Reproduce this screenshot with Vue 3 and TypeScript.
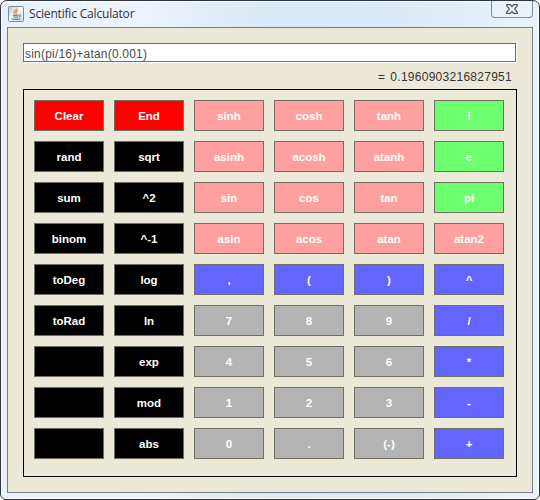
<script setup lang="ts">
import { ref } from 'vue'

type Tone = 'red' | 'black' | 'pink' | 'green' | 'blue' | 'gray'
interface Key { label: string; tone: Tone }

const expression = ref('sin(pi/16)+atan(0.001)')
const result = '0.1960903216827951'

const row = (labels: string[], tones: Tone[]): Key[] =>
  labels.map((label, i) => ({ label, tone: tones[i] }))

const keys: Key[] = [
  ...row(['Clear', 'End', 'sinh', 'cosh', 'tanh', 'i'], ['red', 'red', 'pink', 'pink', 'pink', 'green']),
  ...row(['rand', 'sqrt', 'asinh', 'acosh', 'atanh', 'e'], ['black', 'black', 'pink', 'pink', 'pink', 'green']),
  ...row(['sum', '^2', 'sin', 'cos', 'tan', 'pi'], ['black', 'black', 'pink', 'pink', 'pink', 'green']),
  ...row(['binom', '^-1', 'asin', 'acos', 'atan', 'atan2'], ['black', 'black', 'pink', 'pink', 'pink', 'pink']),
  ...row(['toDeg', 'log', ',', '(', ')', '^'], ['black', 'black', 'blue', 'blue', 'blue', 'blue']),
  ...row(['toRad', 'ln', '7', '8', '9', '/'], ['black', 'black', 'gray', 'gray', 'gray', 'blue']),
  ...row(['', 'exp', '4', '5', '6', '*'], ['black', 'black', 'gray', 'gray', 'gray', 'blue']),
  ...row(['', 'mod', '1', '2', '3', '-'], ['black', 'black', 'gray', 'gray', 'gray', 'blue']),
  ...row(['', 'abs', '0', '.', '(-)', '+'], ['black', 'black', 'gray', 'gray', 'gray', 'blue']),
]
</script>

<template>
  <div class="window">
    <header class="titlebar">
      <svg class="app-icon" width="16" height="16" viewBox="0 0 16 16">
        <defs>
          <linearGradient id="tile" x1="0" y1="0" x2="1" y2="1">
            <stop offset="0" stop-color="#b4c2d0" />
            <stop offset=".45" stop-color="#f6f9fb" />
            <stop offset="1" stop-color="#d3dce5" />
          </linearGradient>
        </defs>
        <rect x=".5" y=".5" width="15" height="15" rx="1" fill="url(#tile)" stroke="#7c8b9b" />
        <path d="M8.8 2.3C9.4 4 5.5 4.8 5.8 6.3c.1.7 1 1.1 1.2 1.9M10 4.3C8.4 5 7.3 5.7 8.2 6.7c.3.5.2 1-.3 1.5" fill="none" stroke="#ee8a28" stroke-width="1.3" />
        <path d="M4.8 9c1.2.6 4.6.5 5.8 0M5.2 10.8c1.4.5 3.7.5 5 0M11 9c1.9-.4 1.9 1.4.1 2M3.5 12.7c2.3 1 7 .9 9 0" fill="none" stroke="#557896" stroke-width="1.1" />
      </svg>
      <span class="title">Scientific Calculator</span>
      <button class="close" aria-label="Close">
        <svg width="12" height="10" viewBox="0 0 12 10">
          <path d="M.7.6h3.6L6 2.5 7.7.6h3.6v1.1L8.7 5l2.6 3.3v1.1H7.7L6 7.5 4.3 9.4H.7V8.3L3.3 5 .7 1.7z" fill="#f4f5f8" stroke="#505666" stroke-width="1.2" />
        </svg>
      </button>
    </header>
    <main class="client">
      <input v-model="expression" class="entry" type="text" spellcheck="false" />
      <div class="result"><span class="equals">=</span><span>{{ result }}</span></div>
      <section class="keypad">
        <button v-for="(key, i) in keys" :key="i" class="key" :class="key.tone">{{ key.label }}</button>
      </section>
    </main>
  </div>
</template>

<style>
body { margin: 0; background: #fff; }
</style>

<style scoped>
.window {
  box-sizing: border-box;
  width: 540px;
  height: 500px;
  padding: 0 6px;
  border: 1px solid #34373d;
  border-radius: 7px 7px 6px 6px;
  background: linear-gradient(90deg, #e9f1fc 0, #edf4fd 25%, #dbe8f7 50%, #dce9f8 72%, #ebf3fd 100%);
  box-shadow: inset 0 0 0 1px #f8fbff;
}
.titlebar { display: flex; height: 26px; align-items: flex-start; }
.app-icon { flex: none; margin: 5px 0 0 1px; }
.title {
  margin: 4px 0 0 5px;
  color: #303238;
  font: 12px/17px "Open Sans", "Noto Sans", sans-serif;
  letter-spacing: -0.18px;
  white-space: nowrap;
}
.close {
  display: flex;
  box-sizing: border-box;
  width: 42px;
  height: 17px;
  margin: 0 0 0 auto;
  padding: 3px 0 0;
  align-items: flex-start;
  justify-content: center;
  border: 1px solid #7e8895;
  border-top: 0;
  border-radius: 0 0 4px 4px;
  background: #eaf2fc;
}
.client {
  box-sizing: border-box;
  width: 526px;
  height: 466px;
  padding: 15px;
  border: 1px solid #777d85;
  background: #ece9d8;
}
.entry {
  display: block;
  box-sizing: border-box;
  width: 493px;
  height: 19px;
  margin: 0;
  padding: 2px 1px 0;
  border: 1px solid #716f64;
  border-radius: 0;
  outline: 0;
  background: #fff;
  box-shadow: 1px 1px 0 #fff;
  color: #4c4c4c;
  font: 12px/15px "Liberation Sans", Arial, sans-serif;
  letter-spacing: 0.2px;
}
.result {
  display: flex;
  height: 27px;
  padding: 8px 5px 0 0;
  box-sizing: border-box;
  justify-content: flex-end;
  color: #333;
  font: 12px/15px "Liberation Sans", Arial, sans-serif;
  letter-spacing: 0.27px;
}
.equals { margin-right: 5px; }
.keypad {
  display: grid;
  box-sizing: border-box;
  width: 494px;
  height: 388px;
  padding: 10px;
  grid-template-columns: repeat(6, 70px);
  grid-auto-rows: 31px;
  gap: 10px;
  align-content: start;
  border: 1px solid #000;
}
.key {
  box-sizing: border-box;
  margin: 0;
  padding: 1px 0 0;
  border: 1px solid #716f64;
  border-radius: 0;
  color: #fff;
  font: bold 11.5px/14px "Liberation Sans", Arial, sans-serif;
}
.red { background: #f00; }
.black { background: #000; }
.pink { background: #ffa0a0; }
.green { background: #6eff6e; }
.blue { background: #6464ff; }
.gray { background: #b4b4b4; }
</style>
